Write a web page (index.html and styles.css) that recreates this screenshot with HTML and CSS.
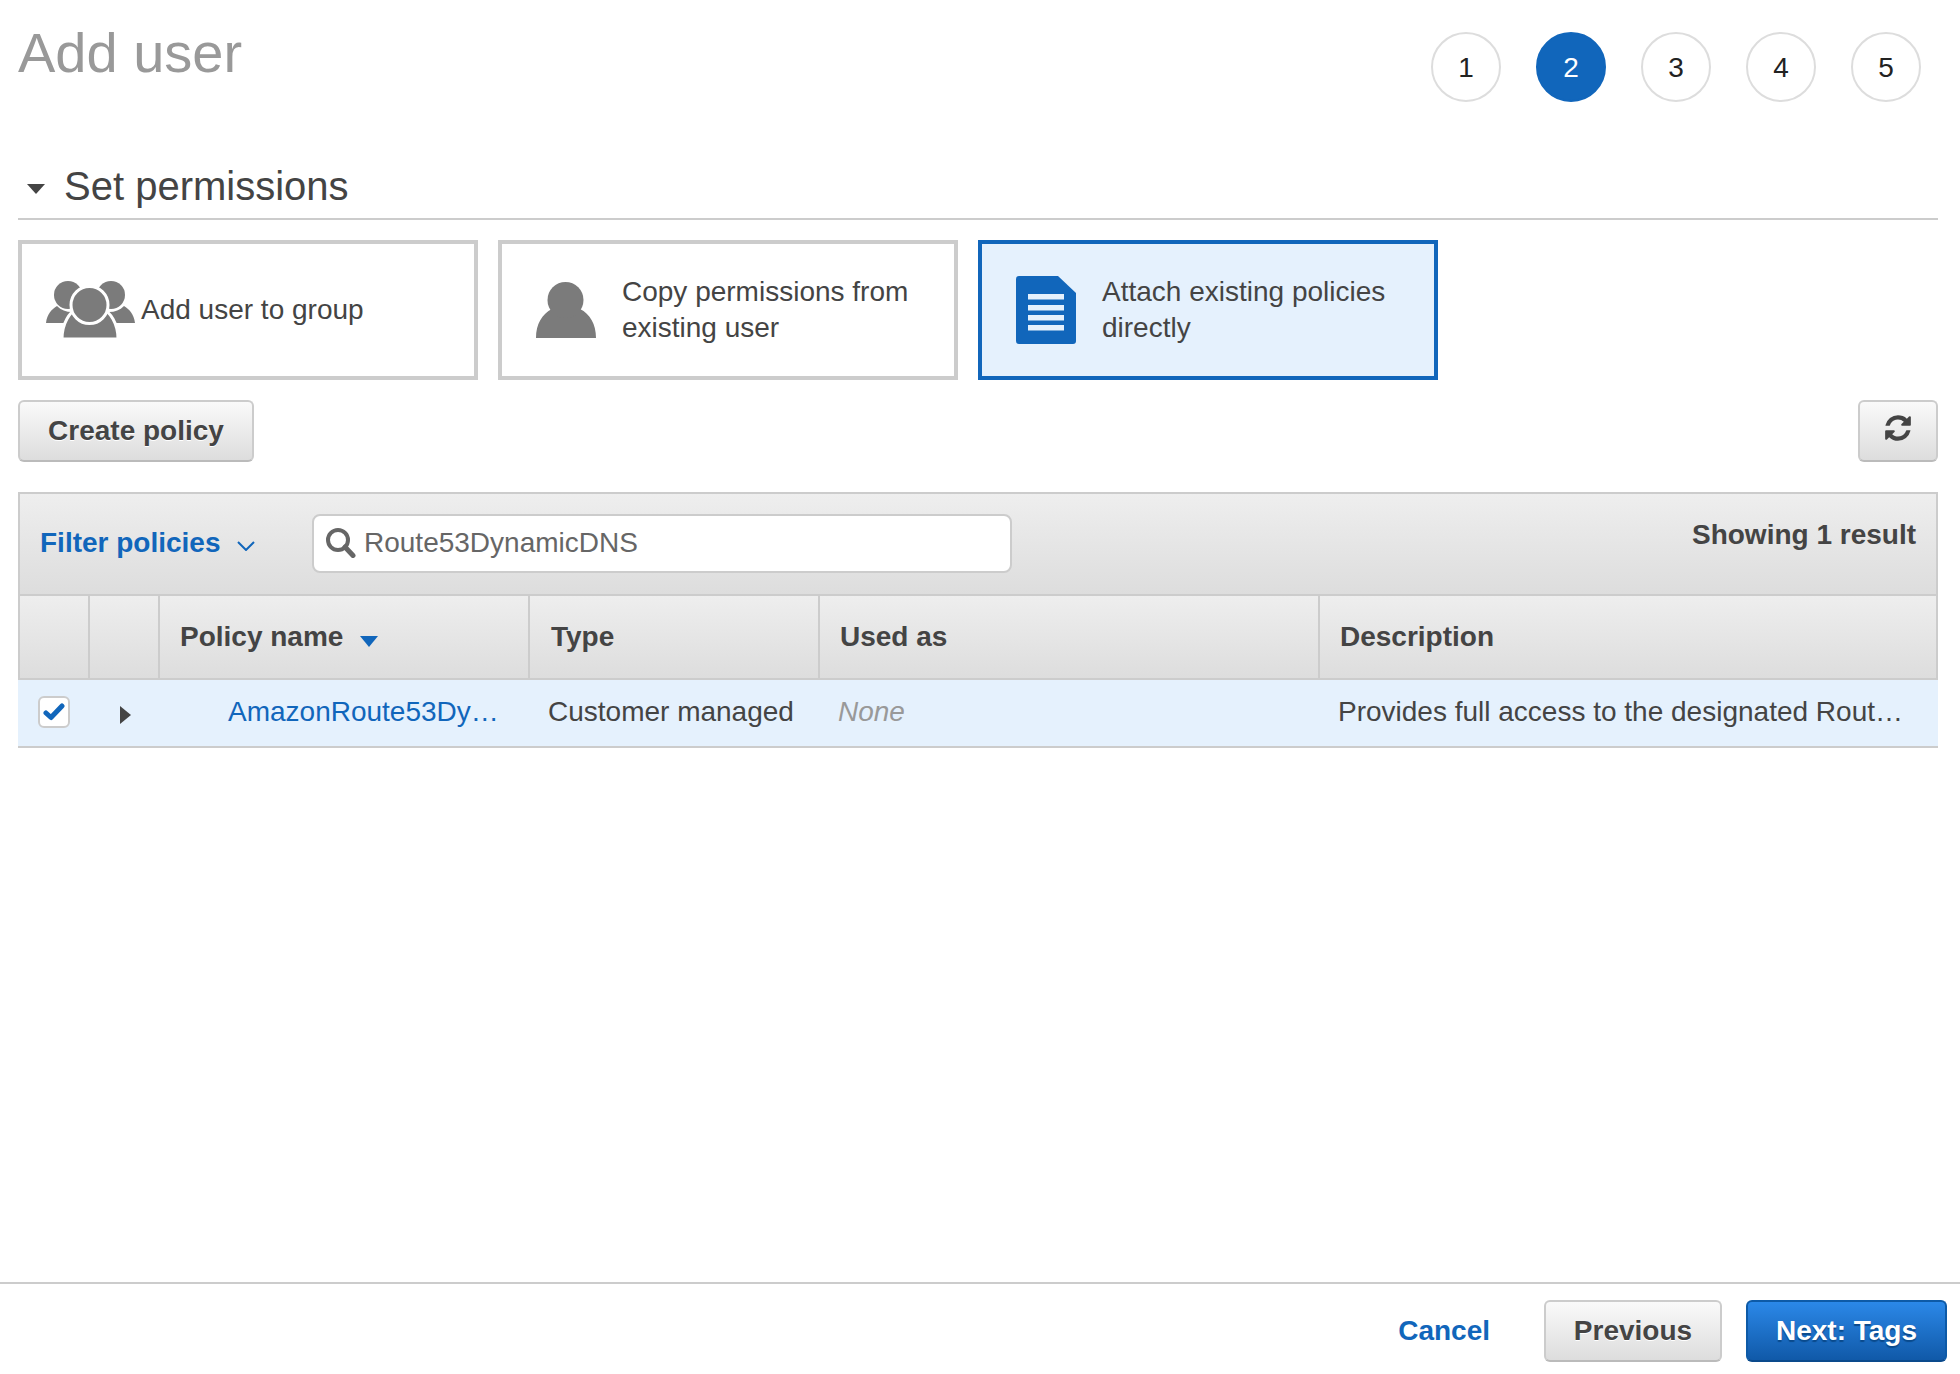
FILE: index.html
```html
<!DOCTYPE html>
<html lang="en">
<head>
<meta charset="utf-8">
<title>Add user</title>
<link rel="stylesheet" href="styles.css">
</head>
<body>
<div class="page">
  <main class="main">
    <header class="top">
      <h1 class="title">Add user</h1>
      <ol class="steps">
        <li class="step">1</li>
        <li class="step step-active">2</li>
        <li class="step">3</li>
        <li class="step">4</li>
        <li class="step">5</li>
      </ol>
    </header>

    <h2 class="section"><span class="caret-down"></span>Set permissions</h2>

    <div class="cards">
      <div class="card">
        <svg class="icon-group" viewBox="0 0 90 58" aria-hidden="true">
          <circle cx="22" cy="14" r="14" fill="#7b7b7b"/>
          <circle cx="65" cy="14" r="14" fill="#7b7b7b"/>
          <path d="M0 42C1 33 6 28 11 25C15 29 20 31 26 31L26 42Z" fill="#7b7b7b"/>
          <path d="M89 42C88 33 83 28 78 25C74 29 69 31 63 31L63 42Z" fill="#7b7b7b"/>
          <path d="M16 58C16 42 24 31 31 27C36 33 51 33 56 27C64 31 72 42 72 58Z" fill="#7b7b7b" stroke="#fff" stroke-width="3"/>
          <circle cx="43.500" cy="24" r="18.500" fill="#7b7b7b" stroke="#fff" stroke-width="3"/>
        </svg>
        <span class="card-text card-text-tight">Add user to group</span>
      </div>
      <div class="card">
        <svg class="icon-user" viewBox="0 0 60 56" aria-hidden="true">
          <path d="M0 56C0 42 6 32 16 27C22 37 38 37 44 27C54 32 60 42 60 56Z" fill="#7b7b7b"/>
          <circle cx="29.500" cy="18" r="18" fill="#7b7b7b"/>
        </svg>
        <span class="card-text">Copy permissions from existing user</span>
      </div>
      <div class="card card-selected">
        <svg class="icon-doc" viewBox="0 0 60 68" aria-hidden="true">
          <path d="M3 0H42L60 17V65A3 3 0 0 1 57 68H3A3 3 0 0 1 0 65V3A3 3 0 0 1 3 0Z" fill="#1166bb"/>
          <rect x="12" y="18" width="36" height="5.500" fill="#e4f0fc"/>
          <rect x="12" y="29" width="36" height="5.500" fill="#e4f0fc"/>
          <rect x="12" y="39" width="36" height="5.500" fill="#e4f0fc"/>
          <rect x="12" y="49" width="36" height="5.500" fill="#e4f0fc"/>
        </svg>
        <span class="card-text">Attach existing policies directly</span>
      </div>
    </div>

    <div class="actions">
      <button class="btn btn-create" type="button">Create policy</button>
      <button class="btn btn-refresh" type="button" aria-label="Refresh">
        <svg class="icon-refresh" viewBox="0 0 1792 1792" aria-hidden="true"><path fill="#444" d="M1639 1056q0 5-1 7-64 268-268 434.5t-478 166.5q-146 0-282.5-55t-243.5-157l-129 129q-19 19-45 19t-45-19-19-45v-448q0-26 19-45t45-19h448q26 0 45 19t19 45-19 45l-137 137q71 66 161 102t187 36q134 0 250-65t186-179q11-17 53-117 8-23 30-23h192q13 0 22.5 9.5t9.5 22.5zm25-800v448q0 26-19 45t-45 19h-448q-26 0-45-19t-19-45 19-45l138-138q-148-137-349-137-134 0-250 65t-186 179q-11 17-53 117-8 23-30 23h-199q-13 0-22.5-9.5t-9.5-22.5v-7q65-268 270-434.5t480-166.5q146 0 284 55.5t245 156.5l130-129q19-19 45-19t45 19 19 45z"/></svg>
      </button>
    </div>

    <section class="policies">
      <div class="toolbar">
        <div class="filter"><span>Filter policies</span>
          <svg class="icon-chevron" viewBox="0 0 18 10" aria-hidden="true"><path d="M1 1L9 9L17 1" fill="none" stroke="#1166bb" stroke-width="2"/></svg>
        </div>
        <div class="search">
          <svg class="icon-search" viewBox="0 0 30 30" aria-hidden="true"><circle cx="12" cy="12" r="10" fill="none" stroke="#666" stroke-width="4"/><path d="M19 19L27 27.500" stroke="#666" stroke-width="5" stroke-linecap="round"/></svg>
          <span>Route53DynamicDNS</span>
        </div>
        <div class="count">Showing 1 result</div>
      </div>
      <table class="table">
        <colgroup>
          <col class="col-check"><col class="col-expand"><col class="col-name"><col class="col-type"><col class="col-used"><col>
        </colgroup>
        <thead>
          <tr>
            <th class="th-first"></th>
            <th></th>
            <th>Policy name<span class="caret-sort"></span></th>
            <th class="th-type">Type</th>
            <th>Used as</th>
            <th class="th-last">Description</th>
          </tr>
        </thead>
        <tbody>
          <tr>
            <td class="td-check"><span class="checkbox"><svg class="icon-check" viewBox="0 0 22 18" aria-hidden="true"><path d="M3 10L8 14.500L19 3" fill="none" stroke="#1166bb" stroke-width="5" stroke-linecap="round" stroke-linejoin="round"/></svg></span></td>
            <td class="td-expand"><span class="caret-right"></span></td>
            <td class="td-name"><a class="link">AmazonRoute53Dy…</a></td>
            <td class="td-type">Customer managed</td>
            <td class="td-used">None</td>
            <td class="td-desc">Provides full access to the designated Rout…</td>
          </tr>
        </tbody>
      </table>
    </section>
  </main>

  <footer class="footer">
    <a class="cancel">Cancel</a>
    <button class="btn btn-prev" type="button">Previous</button>
    <button class="btn btn-next" type="button">Next: Tags</button>
  </footer>
</div>
</body>
</html>
```
FILE: styles.css
```css
* { box-sizing: border-box; }
html, body { margin: 0; padding: 0; }
body {
  font-family: "Liberation Sans", Arial, sans-serif;
  font-size: 28px;
  color: #444;
  background: #fff;
}
.page {
  display: flex;
  flex-direction: column;
  height: 1374px;
  overflow: hidden;
}
.main {
  flex: 1;
  padding: 18px 22px 0 18px;
}
.top {
  display: flex;
  justify-content: space-between;
  align-items: flex-start;
  height: 84px;
}
.title {
  margin: 0;
  font-size: 56px;
  line-height: 70px;
  font-weight: 400;
  color: #999;
}
.steps {
  display: flex;
  gap: 35px;
  list-style: none;
  margin: 14px 17px 0 0;
  padding: 0;
}
.step {
  width: 70px;
  height: 70px;
  padding-top: 2px;
  border: 2px solid #ddd;
  border-radius: 50%;
  display: flex;
  align-items: center;
  justify-content: center;
  color: #222;
  background: #fff;
}
.step-active { background: #1166bb; border-color: #1166bb; color: #fff; }

.section {
  display: flex;
  align-items: center;
  margin: 60px 0 0;
  padding-bottom: 8px;
  border-bottom: 2px solid #ccc;
  font-size: 40px;
  line-height: 48px;
  font-weight: 400;
}
.caret-down {
  width: 0;
  height: 0;
  margin: 6px 19px 0 9px;
  border-left: 9px solid transparent;
  border-right: 9px solid transparent;
  border-top: 10px solid #444;
}

.cards { display: flex; gap: 20px; margin-top: 20px; }
.card {
  width: 460px;
  height: 140px;
  border: 4px solid #ccc;
  display: flex;
  align-items: center;
  background: #fff;
  line-height: 36px;
}
.card-selected { border-color: #1166bb; background: #e5f1fd; }
.card-text { width: 320px; }
.card-text-tight { width: auto; margin-left: 5px; }
.icon-group { width: 90px; height: 58px; margin: 0 0 0 24px; flex: none; }
.icon-user { width: 60px; height: 56px; margin: 0 0 0 34px; flex: none; }
.card .icon-user + .card-text { margin-left: 26px; }
.icon-doc { width: 60px; height: 68px; margin: 0 0 0 34px; flex: none; }
.card .icon-doc + .card-text { margin-left: 26px; }

.actions {
  display: flex;
  justify-content: space-between;
  margin-top: 20px;
}
.btn {
  height: 62px;
  padding: 0;
  font-family: inherit;
  font-size: 28px;
  font-weight: 700;
  color: #444;
  border: 2px solid #ccc;
  border-bottom-color: #bbb;
  border-radius: 6px;
  background: linear-gradient(#fafafa, #ddd);
  text-shadow: 0 1px 0 #fff;
}
.btn-create { width: 236px; }
.btn-refresh { width: 80px; display: flex; align-items: center; justify-content: center; }
.icon-refresh { width: 30px; height: 30px; margin-top: -6px; }

.policies { margin-top: 30px; }
.toolbar {
  display: flex;
  height: 104px;
  border: 2px solid #ccc;
  background: linear-gradient(#eee, #ddd);
  padding-left: 20px;
}
.filter {
  display: flex;
  align-items: center;
  width: 272px;
  height: 100%;
  padding-bottom: 2px;
  font-weight: 700;
  color: #1166bb;
}
.icon-chevron { width: 18px; height: 10px; margin: 6px 0 0 16px; }
.search {
  display: flex;
  align-items: center;
  width: 700px;
  height: 59px;
  margin-top: 20px;
  padding: 0 0 2px 12px;
  border: 2px solid #ccc;
  border-radius: 8px;
  background: #fff;
  color: #666;
}
.icon-search { width: 30px; height: 30px; margin-right: 8px; flex: none; }
.count {
  margin-left: auto;
  padding: 23px 20px 0 0;
  font-weight: 700;
  line-height: 36px;
}

.table {
  width: 100%;
  table-layout: fixed;
  border-collapse: separate;
  border-spacing: 0;
}
.col-check { width: 72px; }
.col-expand { width: 70px; }
.col-name { width: 370px; }
.col-type { width: 290px; }
.col-used { width: 500px; }
.table th {
  height: 84px;
  padding: 0 0 0 20px;
  text-align: left;
  font-weight: 700;
  border-right: 2px solid #ccc;
  border-bottom: 2px solid #ccc;
  background: linear-gradient(#eee, #ddd);
}
.table .th-first { border-left: 2px solid #ccc; }
.table .th-type { padding-left: 21px; }
.caret-sort {
  display: inline-block;
  width: 0;
  height: 0;
  margin-left: 17px;
  vertical-align: -1px;
  border-left: 9px solid transparent;
  border-right: 9px solid transparent;
  border-top: 11px solid #1166bb;
}
.table td {
  height: 68px;
  padding: 0 0 2px 18px;
  background: #e5f1fd;
  border-bottom: 2px solid #ccc;
  white-space: nowrap;
  overflow: hidden;
}
.checkbox {
  display: flex;
  align-items: center;
  justify-content: center;
  width: 32px;
  height: 32px;
  border: 2px solid #ccc;
  border-radius: 6px;
  background: #fff;
}
.table .td-check { padding-left: 20px; }
.icon-check { width: 22px; height: 18px; }
.table .td-expand { padding-left: 30px; }
.caret-right {
  display: block;
  width: 0;
  height: 0;
  margin-top: 5px;
  border-top: 9px solid transparent;
  border-bottom: 9px solid transparent;
  border-left: 11px solid #444;
}
.table .td-name { padding-left: 68px; }
.link { color: #1166bb; }
.table .td-used { font-style: italic; color: #999; }

.footer {
  height: 92px;
  flex: none;
  display: flex;
  align-items: flex-start;
  justify-content: flex-end;
  border-top: 2px solid #ccc;
  padding: 16px 13px 0 0;
}
.cancel {
  font-weight: 700;
  color: #1166bb;
  line-height: 62px;
  margin-right: 54px;
}
.btn-prev { width: 178px; margin-right: 24px; }
.btn-next {
  width: 201px;
  color: #fff;
  border: 2px solid #0d5aa7;
  border-bottom-color: #0a4a8c;
  background: linear-gradient(#2b88e8, #1059a8);
  text-shadow: 0 2px 1px #0a4a8c;
}
```
